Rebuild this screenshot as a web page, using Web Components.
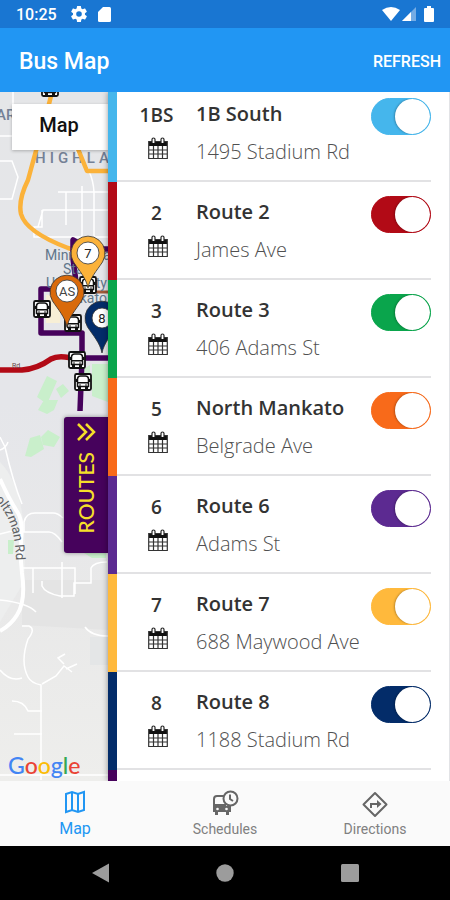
<!DOCTYPE html>
<html lang="en">
<head>
<meta charset="utf-8">
<meta name="viewport" content="width=device-width, initial-scale=1">
<title>Bus Map</title>
<style>
  body { margin: 0; font-family: Roboto, "Liberation Sans", sans-serif; }
</style>
</head>
<body>
<bus-app>
  <status-bar slot="top"></status-bar>
  <app-bar slot="top">Bus Map</app-bar>
  <city-map slot="map"></city-map>
  <route-row code="1BS" name="1B South" stop="1495 Stadium Rd" color="#45b6ec"></route-row>
  <route-row code="2" name="Route 2" stop="James Ave" color="#b20a16"></route-row>
  <route-row code="3" name="Route 3" stop="406 Adams St" color="#0aa54c"></route-row>
  <route-row code="5" name="North Mankato" stop="Belgrade Ave" color="#f86a1a"></route-row>
  <route-row code="6" name="Route 6" stop="Adams St" color="#5c2a91"></route-row>
  <route-row code="7" name="Route 7" stop="688 Maywood Ave" color="#ffb93c"></route-row>
  <route-row code="8" name="Route 8" stop="1188 Stadium Rd" color="#032c69"></route-row>
  <route-row color="#46025c"></route-row>
  <tab-bar slot="bottom"></tab-bar>
  <system-nav slot="bottom"></system-nav>
</bus-app>

<script>
function define(name, html, setup) {
  const template = document.createElement('template');
  template.innerHTML = html;
  customElements.define(name, class extends HTMLElement {
    constructor() {
      super();
      this.attachShadow({ mode: 'open' }).append(template.content.cloneNode(true));
    }
    connectedCallback() { if (setup) setup(this, this.shadowRoot); }
  });
}

define('bus-app', `
<style>
  :host { display: flex; flex-direction: column; height: 100vh; background: #fff; }
  main { flex: 1; min-height: 0; display: grid; grid-template-columns: 24% 1fr; grid-template-rows: 100%; background: #e2e3e6; }
  .map { position: relative; overflow: hidden; }
  .list { overflow: hidden; margin-right: 1px; background: #fff; box-shadow: 0 0 6px rgba(0,0,0,.4); z-index: 1; clip-path: inset(0 0 0 -8px); }
  .scroll { margin-top: -8px; }
</style>
<slot name="top"></slot>
<main>
  <div class="map"><slot name="map"></slot></div>
  <section class="list" aria-label="Routes"><div class="scroll"><slot></slot></div></section>
</main>
<slot name="bottom"></slot>`);

define('status-bar', `
<style>
  :host { display: flex; align-items: center; height: 28px; padding: 0 16px; background: #1976d2; color: #fff; font-size: 16px; font-weight: 500; }
  svg { display: block; fill: #fff; }
  .gear { margin-left: 14px; }
  .card { margin-left: 11px; }
  .right { margin-left: auto; display: flex; align-items: center; gap: 2px; }
  .battery { margin-left: 6px; }
</style>
<span>10:25</span>
<svg class="gear" width="16" height="16" viewBox="2 2 20 20"><path fill-rule="evenodd" d="M19.4 13a7.800 7.800 0 0 0 0-2l2.100-1.650a.5.5 0 0 0 .12-.64l-2-3.460a.5.5 0 0 0-.61-.22l-2.490 1a7.300 7.300 0 0 0-1.690-.98l-.38-2.650A.49.49 0 0 0 14 2h-4a.49.49 0 0 0-.49.42l-.38 2.650c-.61.25-1.170.58-1.690.98l-2.490-1a.5.5 0 0 0-.61.22l-2 3.460a.5.5 0 0 0 .12.64L4.570 11a7.800 7.800 0 0 0 0 2l-2.110 1.650a.5.5 0 0 0-.12.64l2 3.460c.12.22.39.3.61.22l2.490-1c.52.4 1.080.73 1.690.98l.38 2.650c.03.24.24.4.49.4h4c.25 0 .46-.16.49-.4l.38-2.650c.61-.25 1.170-.58 1.690-.98l2.490 1c.23.08.49 0 .61-.22l2-3.460a.5.5 0 0 0-.12-.64zM12 15.500a3.500 3.500 0 1 1 0-7 3.500 3.500 0 0 1 0 7z"/></svg>
<svg class="card" width="13" height="15" viewBox="0 0 13 15"><path d="M5 0h6.500Q13 0 13 1.500v12q0 1.500-1.500 1.500h-10Q0 15 0 13.500V5z"/></svg>
<div class="right">
  <svg width="18" height="14" viewBox="0 0 18 14"><path d="M0 3Q9-3 18 3L9 14z"/></svg>
  <svg width="14" height="14" viewBox="0 0 14 14"><path d="M14 0v14H0z" opacity=".4"/><path d="M9 5v9H0z"/></svg>
  <svg class="battery" width="10" height="16" viewBox="0 0 10 16"><path d="M3 0h4v2h2q1 0 1 1v12q0 1-1 1H1q-1 0-1-1V3q0-1 1-1h2z"/></svg>
</div>`);

define('app-bar', `
<style>
  :host { display: flex; align-items: center; justify-content: space-between; height: 64px; padding: 3px 9px 0 19px; box-sizing: border-box; background: #2196f3; color: #fff; }
  h1 { margin: 0; font-size: 23px; line-height: 28px; font-weight: 500; }
  button { border: 0; padding: 0; background: none; color: inherit; font: 500 16px/24px Roboto, sans-serif; }
</style>
<h1><slot></slot></h1>
<button type="button">REFRESH</button>`);

define('route-row', `
<style>
  :host { display: block; height: 98px; border-left: 9px solid var(--route); font-family: "Open Sans", "Noto Sans", sans-serif; font-size: 20px; line-height: 24px; color: #333; }
  .row { box-sizing: border-box; height: 100%; margin-right: 18px; padding: 14px 0 0; border-bottom: 2px solid #e2e2e4; display: grid; grid-template-columns: 79px 1fr auto; align-items: start; }
  .code { display: flex; flex-direction: column; align-items: center; gap: 10px; padding-top: 5px; text-align: center; }
  .text { display: flex; flex-direction: column; gap: 14px; padding-top: 4px; }
  b, label { font-weight: 600; }
  b { font-size: 19px; }
  .stop { color: #505050; font-weight: 300; white-space: nowrap; }
  button { border: 0; background: none; padding: 0 0 0 2px; display: block; }
  svg { display: block; }
  input { appearance: none; box-sizing: border-box; margin: 0; width: 60px; height: 37px; border: 1px solid var(--route); border-radius: 19px; background: var(--route); display: flex; justify-content: flex-end; overflow: hidden; }
  input::before { content: ""; width: 35px; height: 35px; border-radius: 50%; background: #fff; box-shadow: -1px 0 2px rgba(0,0,0,.25); }
  input:not(:checked) { justify-content: flex-start; background: #ccc; }
</style>
<div class="row">
  <div class="code"><b></b>
    <button type="button" aria-label="Schedule"><svg width="20" height="23" viewBox="0 0 20 23"><path d="M1 4h18v5H1z" fill="#111"/><path d="M.7 4.500h18.600v17H.7zM1 13h18M1 17h18M5.500 9v12M10 9v12M14.500 9v12" fill="none" stroke="#333" stroke-width="1.200"/><path d="M4 6V2.500a1.500 1.500 0 0 1 3 0V6M13 6V2.500a1.500 1.500 0 0 1 3 0V6" fill="#fff" stroke="#222" stroke-width="1.200"/></svg></button>
  </div>
  <div class="text"><label for="toggle"></label><span class="stop"></span></div>
  <input id="toggle" type="checkbox" role="switch" checked>
</div>`, (host, root) => {
  host.style.setProperty('--route', host.getAttribute('color'));
  if (!host.hasAttribute('name')) { root.querySelector('.row').remove(); return; }
  root.querySelector('b').textContent = host.getAttribute('code');
  root.querySelector('label').textContent = host.getAttribute('name');
  root.querySelector('.stop').textContent = host.getAttribute('stop');
});

define('city-map', `
<style>
  :host { display: block; height: 100%; }
  .canvas { display: block; width: 100%; height: 100%; }
  .type { position: absolute; left: 12px; right: 0; top: 12px; height: 46px; border: 0; padding: 0 2px 4px 0; background: #fff; font: 500 20px/24px Roboto, sans-serif; color: #111; box-shadow: 0 1px 3px rgba(0,0,0,.25); }
  .drawer { position: absolute; right: 0; top: 325px; width: 44px; height: 136px; box-sizing: border-box; border: 0; border-radius: 3px 0 0 3px; padding: 5px 0 20px; background: #46025c; color: #f5df2a; display: flex; flex-direction: column; align-items: center; justify-content: space-between; box-shadow: 0 0 4px rgba(0,0,0,.4); }
  .drawer span { writing-mode: vertical-rl; transform: rotate(180deg); font: 500 21px/26px Lato, sans-serif; }
  .logo { position: absolute; left: 8px; bottom: 2px; font: 500 23px/28px Lato, sans-serif; }
  .b { color: #4285f4; } .r { color: #ea4335; } .y { color: #fbbc05; } .g { color: #34a853; }
</style>
<svg class="canvas" viewBox="0 0 108 689" preserveAspectRatio="xMinYMin slice" font-family="Roboto, sans-serif">
  <defs>
    <linearGradient id="land" x1="0" y1="0" x2="0" y2="1"><stop offset="0" stop-color="#e5e6e8"/><stop offset=".45" stop-color="#e5e6ea"/><stop offset=".75" stop-color="#e9e9e9"/><stop offset="1" stop-color="#eeeeec"/></linearGradient>
    <g id="bus"><rect x="-8" y="-8" width="16" height="16" rx="1.500" fill="#fff" stroke="#111" stroke-width="1.800"/><path d="M-5.500 4.500v-8q.5-2.500 3-2.500h5q2.500 0 3 2.500v8z" fill="#fff" stroke="#111" stroke-width="1.500"/><path d="M-5.500 0h11v1.500h-11zM-5 4.500h3v3h-3zM2 4.500h3v3H2zM-7.500-3h1.500v3h-1.500zM6-3h1.500v3H6z" fill="#111"/><circle cx="-3" cy="3" r=".8" fill="#111"/><circle cx="3" cy="3" r=".8" fill="#111"/></g>
    <path id="pin" d="M0 27C-2 17-8.500 10-14.500 1A17 17 0 1 1 14.500 1C8.500 10 2 17 0 27z"/>
  </defs>
  <rect width="108" height="689" fill="url(#land)"/>
  <path d="M0 370Q30 400 24 490L0 530z" fill="#edeeee"/>
  <path d="M22 488h86v50l-86-5z" fill="#e4e4e4"/>
  <path d="M90 545h18v28H90z" fill="#e4e6e7"/>
  <g fill="none" stroke="#fff" stroke-width="1.500">
    <path d="M13 0v44H0M0 69h12l6 16-6 22H0M38 135l5-17h65M58 100h50M66 100v33M82 94v50M94 100v44M42 118v17H34v10h74M75 58q18 20 19 42M0 345l5 10q8 35 17 57"/>
    <path d="M8 350q-2 6-8 8M24 440v-10q2-9 11-9h18q5 0 10 5M22 440h27q6 0 13 10M22 476h53v26M33 476v25M62 470v36M42 489v5q3 7 18 10h14v-13h17v-15q3-6 16-6M0 442l12-3"/>
    <path d="M22 534h7q7 3-1 13-8 23 0 38 3 6 13 8v95M0 683h108M12 609q12 0 16 10h14M14 642h28M0 508q28 3 36 12M85 535q6 9 23 9M42 592l14-8 8-10 8 6m-8-8-6-6 7-4m1 15 11-5M0 578q10 12 22 8"/>
  </g>
  <path d="M0 387q9 20 18 34 5 8 3 28-1 15 1 32 4 28-5 42-6 10-17 16" fill="none" stroke="#fff" stroke-width="4"/>
  <g fill="#c9efcb">
    <path d="M37 305l10-21 10 5-10 23zM56 297l7-5 6 7-8 7zM38 318l6-10h14l-4 10-7 4zM25 364l5-18 10-3 4 14-13 8zM41 345l7-7 12 7-6 10-11-2zM82 278l8-5v18l-8 4zM92 272h16v38l-16-6zM8 448h6l-1 14H8zM84 461h22v5H92z"/>
  </g>
  <g fill="#748196" font-size="15" font-weight="500">
    <text x="-4" y="28">AR</text><text x="35" y="71" letter-spacing="4">HIGHLA</text>
  </g>
  <g fill="none" stroke-linejoin="round">
    <path d="M52 0l-4 16-14 50-6 22q-10 20-7 34 5 18 47 34l20 6M78 57l9 22h21" stroke="#fbb23a" stroke-width="4.500"/>
    <path d="M108 200H83" stroke="#a05a38" stroke-width="3"/>
    <path d="M108 157H89l-16-9v19l4 30H41v44h41v25h26M82 240v26l-2 53" stroke="#46025c" stroke-width="5.500"/>
    <path d="M0 278h22q15-1 29-11 9-5 27 1" stroke="#b20a16" stroke-width="5.500"/>
  </g>
  <path d="M46 203h14v28H46z" fill="#f7efd6"/>
  <g fill="#61768b" font-size="14"><text x="45" y="168">Minnesota</text><text x="63" y="182">State</text><text x="46" y="196">University</text><text x="72" y="211">nkato</text></g>
  <text x="12" y="276" font-size="7" fill="#694545">Rd</text>
  <path id="road" d="M-5 408Q16 429 16 470" fill="none"/><text font-size="13" fill="#5d6063"><textPath href="#road">oltzman Rd</textPath></text>
  <use href="#bus" x="50" y="-4"/><use href="#bus" x="42" y="217"/><use href="#bus" x="88" y="193"/><use href="#bus" x="73" y="231"/><use href="#bus" x="77" y="268"/><use href="#bus" x="83" y="290"/>
  <g stroke="#333" stroke-width=".8" text-anchor="middle" font-size="13">
    <g transform="translate(102 228)"><use href="#pin" y="6" fill="#032c69"/><circle r="10" cy="-2" fill="#fff"/><text y="3" fill="#222" stroke="none">8</text></g>
    <g transform="translate(88 161)"><use href="#pin" y="8" fill="#fbb23a"/><circle r="11" cy="0" fill="#fff"/><text y="5" fill="#222" stroke="none">7</text></g>
    <g transform="translate(67 199)"><use href="#pin" y="9" fill="#d96a0b"/><circle r="11" cy="0" fill="#fff"/><text y="5" fill="#444" stroke="none">AS</text></g>
  </g>
</svg>
<button class="type" type="button">Map</button>
<button class="drawer" type="button"><svg width="20" height="20" viewBox="0 0 20 20" fill="none" stroke="#f5df2a" stroke-width="2.500"><path d="M2 2l8 8-8 8M10 2l8 8-8 8"/></svg><span>ROUTES</span></button>
<div class="logo"><span class="b">G</span><span class="r">o</span><span class="y">o</span><span class="b">g</span><span class="g">l</span><span class="r">e</span></div>`);

define('tab-bar', `
<style>
  :host { display: block; background: #fafafa; }
  nav { display: grid; grid-template-columns: repeat(3, 1fr); height: 65px; }
  a { display: flex; flex-direction: column; align-items: center; padding-top: 9px; gap: 1px; text-decoration: none; color: #808080; font-size: 14px; line-height: 20px; }
  a.on { color: #2196f3; font-size: 16px; }
  svg { display: block; fill: none; stroke: #666; stroke-width: 2; }
  .on svg { stroke: #2196f3; }
</style>
<nav>
  <a class="on" href="#map" aria-current="page"><svg width="28" height="28" viewBox="0 0 28 28"><path d="M5 4l6-2 6 2 6-2v18l-6 2-6-2-6 2zM11 2v18M17 4v18"/></svg>Map</a>
  <a href="#schedules"><svg width="28" height="28" viewBox="0 0 28 28"><path d="M14 6H6q-3 0-3 3v12h16v-6M3 15h12M3 18h16"/><path d="M3 16h16v6h-1v3h-3v-3H7v3H4v-3H3z" fill="#666" stroke="none"/><circle cx="19.500" cy="8.500" r="7" fill="#fafafa"/><path d="M19 4.500V9l3 2"/><circle cx="6.500" cy="19" r="1.300" fill="#fafafa" stroke="none"/><circle cx="15.500" cy="19" r="1.300" fill="#fafafa" stroke="none"/></svg>Schedules</a>
  <a href="#directions"><svg width="28" height="28" viewBox="0 0 28 28"><path d="M14 3l11.500 11.500L14 26 2.500 14.500z" stroke-linejoin="round"/><path d="M10 18v-4h7"/><path d="M16 10l4.500 4-4.500 4z" fill="#666" stroke="none"/></svg>Directions</a>
</nav>`);

define('system-nav', `
<style>
  :host { display: flex; align-items: center; justify-content: space-between; box-sizing: border-box; height: 54px; padding: 0 20%; background: #000; }
  button { border: 0; background: none; padding: 0; }
  svg { display: block; fill: #9c9c9c; }
</style>
<button type="button" aria-label="Back"><svg width="20" height="20" viewBox="0 0 20 20"><path d="M19 .5v19L2 10z"/></svg></button>
<button type="button" aria-label="Home"><svg width="20" height="20" viewBox="0 0 20 20"><circle cx="10" cy="10" r="8.700"/></svg></button>
<button type="button" aria-label="Recent apps"><svg width="20" height="20" viewBox="0 0 20 20"><rect x="1" y="1" width="18" height="18" rx="1.500"/></svg></button>`);
</script>
</body>
</html>
